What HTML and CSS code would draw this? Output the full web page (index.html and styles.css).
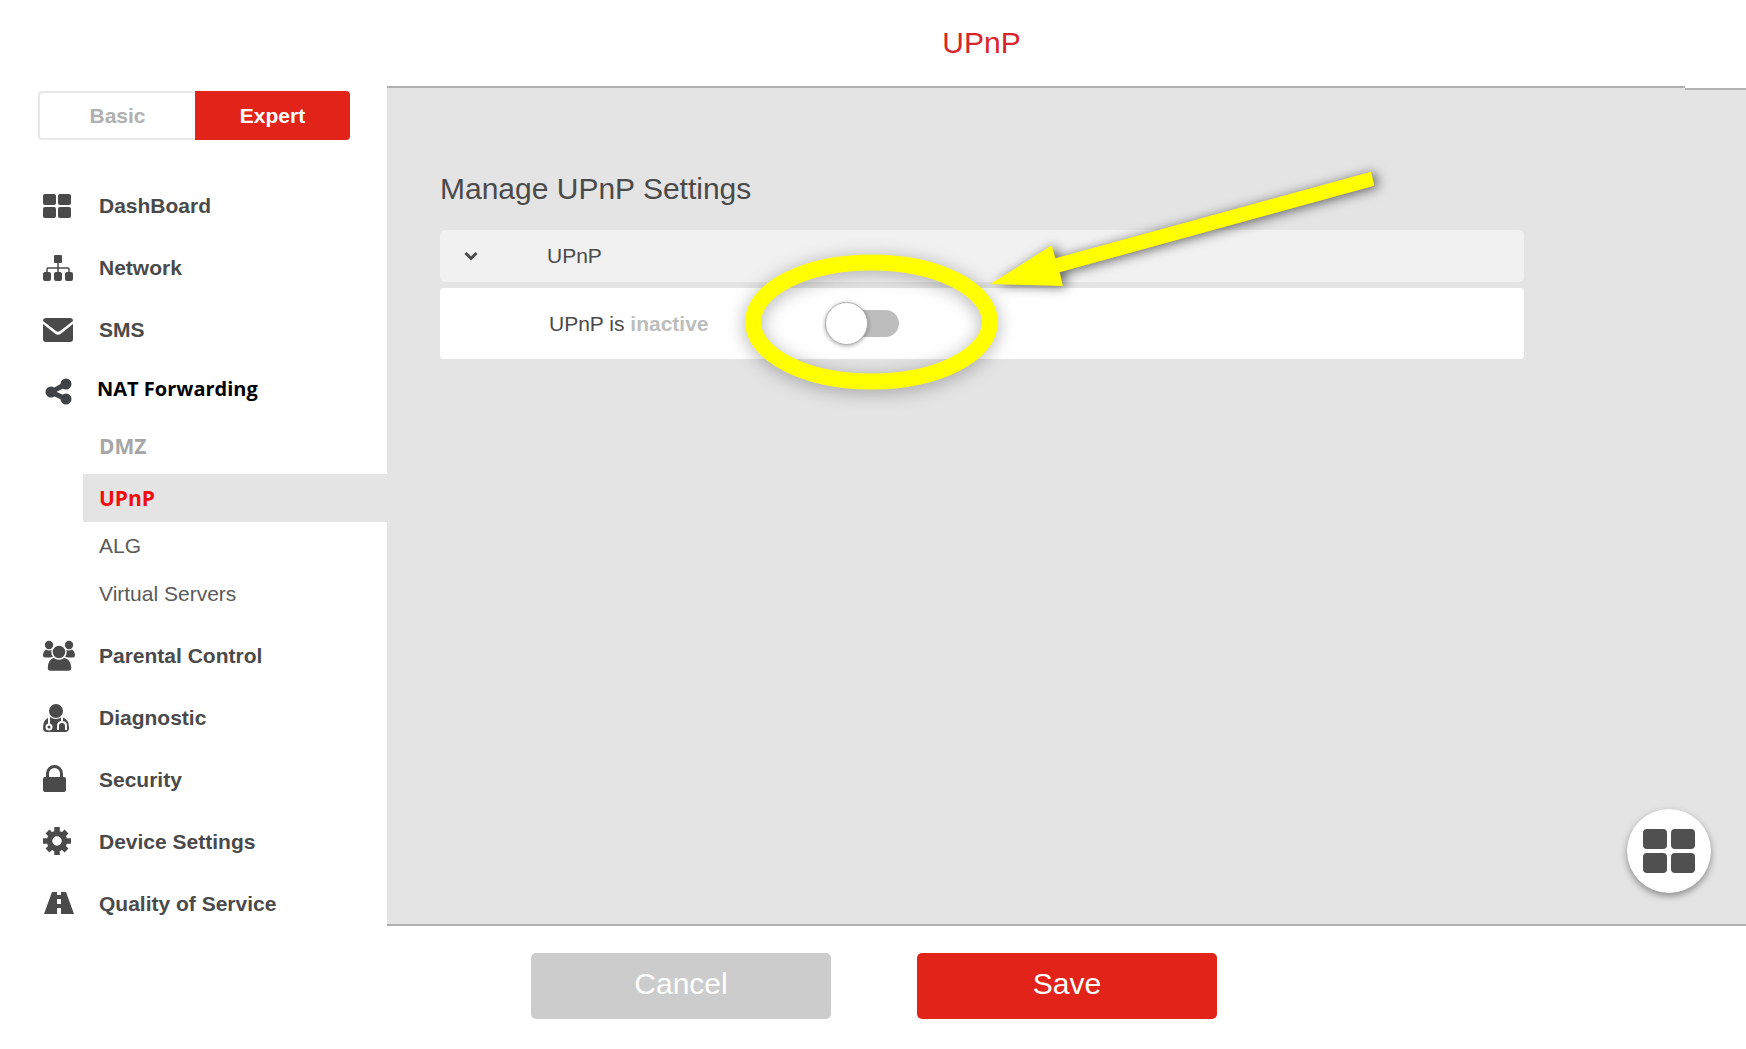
FILE: index.html
```html
<!DOCTYPE html>
<html lang="en">
<head>
<meta charset="utf-8">
<title>UPnP</title>
<link rel="stylesheet" href="styles.css">
</head>
<body>
<div class="page">
  <aside class="sidebar">
    <div class="mode">
      <button type="button" class="mode-btn">Basic</button>
      <button type="button" class="mode-btn mode-on">Expert</button>
    </div>
    <nav class="nav">
      <a class="item" href="#"><svg class="icon" viewBox="0 0 32 32"><rect x="0" y="4" width="13" height="11" rx="2"/><rect x="15" y="4" width="13" height="11" rx="2"/><rect x="0" y="17" width="13" height="11" rx="2"/><rect x="15" y="17" width="13" height="11" rx="2"/></svg>DashBoard</a>
      <a class="item" href="#"><svg class="icon" viewBox="0 0 32 32"><rect x="11" y="3" width="8" height="8" rx="1"/><rect x="0" y="20" width="8" height="9" rx="2"/><rect x="11" y="20" width="8" height="9" rx="2"/><rect x="22" y="20" width="8" height="9" rx="2"/><path d="M15 10v11M4 21v-4q0-1 1-1h20q1 0 1 1v4" fill="none" stroke="currentColor" stroke-width="1.500"/></svg>Network</a>
      <a class="item" href="#"><svg class="icon" viewBox="0 0 32 32"><path d="M3 4h24a3 3 0 0 1 3 3L17 17q-2 1.500-4 0L0 7a3 3 0 0 1 3-3zM0 10l12.500 10q2.500 1.500 5 0L30 10V25a3 3 0 0 1-3 3H3a3 3 0 0 1-3-3z"/></svg>SMS</a>
      <a class="item item-open" href="#"><svg class="icon share" viewBox="0 0 32 32"><circle cx="8" cy="19" r="5.500"/><circle cx="23" cy="11" r="5.500"/><circle cx="23" cy="26" r="5.500"/><path d="M23 11L8 19l15 7" fill="none" stroke="currentColor" stroke-width="5"/></svg>NAT Forwarding</a>
      <div class="subnav">
        <a class="sub sub-dim" href="#">DMZ</a>
        <a class="sub sub-on" href="#" aria-current="page">UPnP</a>
        <a class="sub" href="#">ALG</a>
        <a class="sub" href="#">Virtual Servers</a>
      </div>
      <a class="item" href="#"><svg class="icon" viewBox="0 0 32 32"><circle cx="6" cy="5" r="4.200"/><circle cx="26" cy="5" r="4.200"/><path d="M3 9.500q3 2 7 0v8H3q-3 0-3-2 0-4 3-6zM29 9.500q-3 2-7 0v8h7q3 0 3-2 0-4-3-6z"/><g stroke="#fff" stroke-width="1.500"><path d="M11 17q5 3 10 0 8 2 8 11 0 3.500-4 3.500H8q-4 0-4-3.500 0-9 7-11z"/><circle cx="16" cy="12" r="7"/></g></svg>Parental Control</a>
      <a class="item" href="#"><svg class="icon" viewBox="0 0 32 32"><path d="M7 15q6 4 12 0 7 2 7 11 0 4-4 4H4q-4 0-4-4 0-9 7-11z"/><circle cx="13" cy="9" r="7"/><g fill="none" stroke="#fff" stroke-width="2"><path d="M6 15v7M19 15v5M15 28v-4q0-4 4-4t4 4v4"/><circle cx="6" cy="25" r="2.500"/></g></svg>Diagnostic</a>
      <a class="item" href="#"><svg class="icon" viewBox="0 0 32 32"><path d="M2 13h1v-3.500a8.500 8.500 0 0 1 17 0V13h1q2 0 2 2v11q0 2-2 2H2q-2 0-2-2V15q0-2 2-2zm4 0h11V9.500a5.500 5.500 0 0 0-11 0z"/></svg>Security</a>
      <a class="item" href="#"><svg class="icon" viewBox="0 0 32 32"><circle cx="14" cy="15" r="7.500" fill="none" stroke="currentColor" stroke-width="5.500"/><path d="M14 1v5M14 24v5M0 15h5M23 15h5M4.500 5.500L8 9M20 21l3.500 3.500M4.500 24.500L8 21M20 9l3.500-3.500" stroke="currentColor" stroke-width="5.500"/></svg>Device Settings</a>
      <a class="item" href="#"><svg class="icon" viewBox="0 0 32 32"><path d="M9 4h14l8 22H1z"/><path d="M16 4v3M16 11v5M16 20v6" stroke="#fff" stroke-width="4"/></svg>Quality of Service</a>
    </nav>
  </aside>
  <header class="top"><h1 class="title">UPnP</h1></header>
  <main class="content">
    <h2 class="heading">Manage UPnP Settings</h2>
    <section class="panel">
      <button type="button" class="panel-head"><svg class="chevron" viewBox="0 0 14 10"><path d="M1.500 2L7 7.500 12.500 2" fill="none" stroke="currentColor" stroke-width="3"/></svg>UPnP</button>
      <div class="panel-body">
        <label class="state" for="upnp">UPnP is <b class="inactive">inactive</b></label>
        <input class="toggle" type="checkbox" id="upnp" role="switch">
      </div>
      <svg class="callout" viewBox="0 0 720 280" aria-hidden="true">
        <ellipse class="ring" cx="171.500" cy="172" rx="118.500" ry="59.500"/>
        <path class="arrow" d="M290.500 134L351.700 95.300 355.300 108.300 671 21.700 674.400 35.700 359.700 122.300 362.800 136z"/>
      </svg>
    </section>
    <button type="button" class="fab" aria-label="Menu"><svg class="fab-icon" viewBox="0 0 52 44"><rect width="24" height="20" rx="4"/><rect x="28" width="24" height="20" rx="4"/><rect y="24" width="24" height="20" rx="4"/><rect x="28" y="24" width="24" height="20" rx="4"/></svg></button>
  </main>
  <footer class="actions">
    <button type="button" class="btn">Cancel</button>
    <button type="button" class="btn btn-save">Save</button>
  </footer>
</div>
</body>
</html>
```
FILE: styles.css
```css
* { box-sizing: border-box; }
body { margin: 0; background: #fff; color: #4a4a4a; font: 21px/24px "Liberation Sans", Arial, sans-serif; }
button { font: inherit; color: inherit; border: 0; padding: 0; cursor: pointer; }
a { color: inherit; text-decoration: none; }
.page { display: grid; grid-template-columns: 387px 1fr; grid-template-rows: 86px 1fr 123px; min-height: 100vh; }
.sidebar { grid-column: 1; grid-row: 1 / 4; padding-top: 91px; }
.mode { display: flex; height: 49px; margin: 0 37px 0 38px; }
.mode-btn { flex: 1; background: #fff; border: 2px solid #e8e8e8; border-right: 0; border-radius: 4px 0 0 4px; color: #b0b0b0; font-weight: bold; }
.mode-on { background: #e2231a; border: 0; border-radius: 0 4px 4px 0; color: #fff; }
.nav { padding-top: 35px; }
.item { display: flex; align-items: center; gap: 24px; height: 62px; padding-left: 43px; font-weight: bold; }
.icon { width: 32px; height: 32px; fill: currentColor; overflow: visible; }
.item-open { gap: 22px; height: 55px; color: #000; font-family: "Open Sans", sans-serif; font-size: 20px; }
.share { color: #3f4347; }
.subnav { display: flex; flex-direction: column; padding: 0 0 7px 83px; }
.sub { padding: 12px 16px; color: #5a5a5a; }
.sub-dim { padding: 18px 16px 16px; color: #a6a6a6; font-weight: bold; font-family: "Open Sans", sans-serif; }
.sub-on { background: #e4e4e4; color: #f20d0d; font-weight: bold; font-family: "Open Sans", sans-serif; }
.top { grid-column: 2; grid-row: 1; display: flex; align-items: center; justify-content: center; padding-right: 170px; }
.title { margin: 0; color: #d6262b; font-size: 30px; font-weight: normal; }
.content { grid-column: 2; grid-row: 2; position: relative; background: #e4e4e4; border: solid #b0b0b0; border-width: 2px 0; padding: 83px 222px 0 53px; }
.content::after { content: ""; position: absolute; top: -2px; right: 0; width: 61px; height: 4px; background: linear-gradient(#fff 50%, #b4b4b4 50%); }
.heading { margin: 0 0 23px; font-size: 30px; line-height: 36px; font-weight: normal; }
.panel { position: relative; display: grid; gap: 6px; }
.panel-head { display: flex; align-items: center; height: 52px; padding-left: 24px; gap: 69px; border-radius: 5px; background: #f1f1f1; }
.chevron { width: 14px; height: 10px; }
.panel-body { display: flex; align-items: center; height: 71px; padding-left: 109px; border-radius: 4px; background: #fff; }
.state { width: 276px; }
.inactive { color: #bdbdbd; }
.toggle { appearance: none; display: flex; align-items: center; width: 74px; height: 27px; margin: 0; border-radius: 14px; background: #bdbdbd; }
.toggle::before { content: ""; width: 41px; height: 41px; border: 1px solid #b0b0b0; border-radius: 50%; background: #fff; box-shadow: 0 1px 4px rgba(0, 0, 0, .35); }
.callout { position: absolute; left: 260px; top: -80px; width: 720px; height: 280px; pointer-events: none; }
.ring { fill: none; stroke: #ff0; stroke-width: 16; filter: drop-shadow(0 3px 9px rgba(0, 0, 0, .3)); }
.arrow { fill: #ff0; filter: drop-shadow(4px 1px 6px rgba(0, 0, 0, .6)); }
.fab { position: absolute; right: 35px; bottom: 31px; width: 84px; height: 84px; display: grid; place-items: center; border-radius: 50%; background: #fff; box-shadow: 0 3px 7px rgba(0, 0, 0, .4); }
.fab-icon { width: 52px; height: 44px; fill: #505050; }
.actions { grid-column: 1 / 3; grid-row: 3; display: flex; justify-content: center; align-items: flex-start; gap: 86px; padding: 27px 0 0 2px; }
.btn { width: 300px; height: 66px; padding-bottom: 4px; border-radius: 5px; background: #ccc; color: #fff; font-size: 30px; }
.btn-save { background: #e2231a; }
```
